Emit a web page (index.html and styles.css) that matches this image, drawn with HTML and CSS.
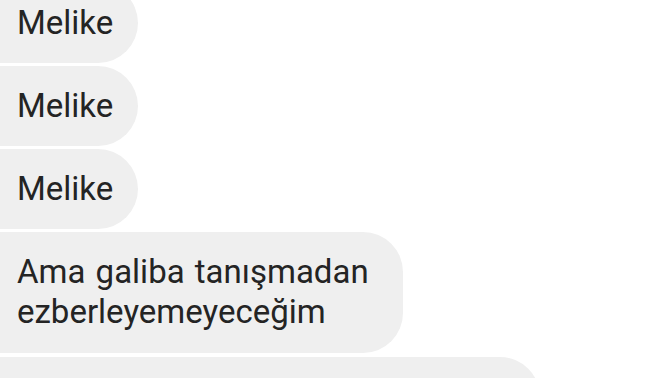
FILE: index.html
```html
<!DOCTYPE html>
<html lang="tr">
<head>
    <meta charset="UTF-8">
    <meta name="viewport" content="width=device-width, initial-scale=1.0">
    <title>Mesajlar</title>
    <link rel="stylesheet" href="styles.css">
</head>
<body>
    <div class="thread">
        <div class="bubble">Melike</div>
        <div class="bubble">Melike</div>
        <div class="bubble">Melike</div>
        <div class="bubble bubble-wide">Ama galiba tanışmadan<br>ezberleyemeyeceğim</div>
        <div class="bubble bubble-next"></div>
    </div>
</body>
</html>
```

FILE: styles.css
```css
html, body {
    margin: 0;
    padding: 0;
    background: #fff;
    overflow: hidden;
}
body {
    font-family: Roboto, "Noto Sans", sans-serif;
    color: #242424;
    width: 672px;
    height: 378px;
}
.thread {
    display: flex;
    flex-direction: column;
    align-items: flex-start;
    gap: 3.3px;
    margin-top: -17.5px;
    margin-left: -20px;
}
.bubble {
    background: #efefef;
    font-size: 33px;
    line-height: 40px;
    word-spacing: 2px;
    padding: 20px 25px 20px 37px;
    border-radius: 12px 40px 40px 12px;
}
.bubble-wide {
    padding: 20px 34px 21px 37px;
}
.bubble-next {
    width: 498px;
    height: 40px;
}
```
